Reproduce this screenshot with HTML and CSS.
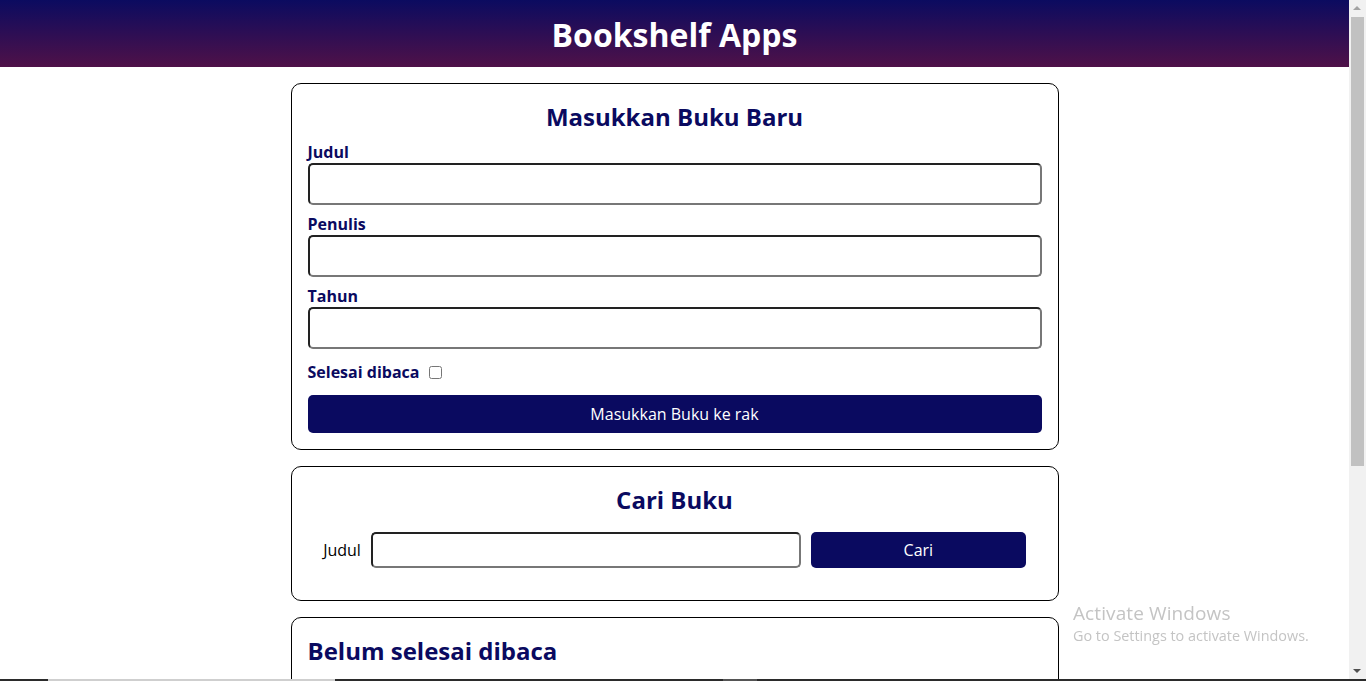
FILE: index.html
```html
<!DOCTYPE html>
<html lang="id">
<head>
<meta charset="utf-8">
<title>Bookshelf Apps</title>
<link rel="stylesheet" href="styles.css">
</head>
<body>
<div class="page">
  <header class="head-bar">
    <h1>Bookshelf Apps</h1>
  </header>
  <main class="main">
    <section class="card">
      <h2 class="card-title">Masukkan Buku Baru</h2>
      <form class="book-form">
        <div class="field">
          <label for="title">Judul</label>
          <input id="title" type="text" class="text-input">
        </div>
        <div class="field">
          <label for="author">Penulis</label>
          <input id="author" type="text" class="text-input">
        </div>
        <div class="field">
          <label for="year">Tahun</label>
          <input id="year" type="number" class="text-input">
        </div>
        <div class="check-row">
          <label for="done">Selesai dibaca</label>
          <input id="done" type="checkbox" class="check">
        </div>
        <button type="button" class="btn btn-full">Masukkan Buku ke rak</button>
      </form>
    </section>

    <section class="card">
      <h2 class="card-title">Cari Buku</h2>
      <form class="search-form">
        <label for="search" class="search-label">Judul</label>
        <input id="search" type="text" class="text-input search-input">
        <button type="button" class="btn search-btn">Cari</button>
      </form>
    </section>

    <section class="card card-list">
      <h2 class="card-title left">Belum selesai dibaca</h2>
      <div class="book-list"></div>
    </section>
  </main>
</div>

<div class="scrollbar">
  <div class="sb-arrow sb-up"></div>
  <div class="sb-thumb"></div>
  <div class="sb-arrow sb-down"></div>
</div>

<div class="watermark">
  <div class="wm-title">Activate Windows</div>
  <div class="wm-sub">Go to Settings to activate Windows.</div>
</div>

<div class="taskbar">
  <span class="tb-seg tb-dark1"></span>
  <span class="tb-seg tb-light"></span>
  <span class="tb-seg tb-dark2"></span>
  <span class="tb-seg tb-mid"></span>
  <span class="tb-seg tb-dark3"></span>
</div>
</body>
</html>
```

FILE: styles.css
```css
html, body {
  margin: 0;
  padding: 0;
  overflow: hidden;
  height: 100%;
}

body {
  font-family: "Open Sans", "Noto Sans", sans-serif;
  background: #ffffff;
  color: #000;
}

.page {
  margin-right: 17px;
}

.head-bar {
  height: 67px;
  background: linear-gradient(to bottom, #0b0b60 0%, #4f1148 100%);
  display: flex;
  align-items: center;
  justify-content: center;
}

.head-bar h1 {
  margin: 0;
  color: #ffffff;
  font-size: 32px;
  font-weight: 700;
  line-height: 1;
  position: relative;
  top: 1px;
}

.main {
  width: 768px;
  margin: 16px auto 0;
  display: flex;
  flex-direction: column;
  gap: 16px;
}

.card {
  border: 1px solid #000;
  border-radius: 10px;
  padding: 16px;
}

.card-title {
  margin: 0;
  font-size: 24px;
  font-weight: 700;
  color: #0a0a60;
  text-align: center;
  line-height: 33px;
}

.card-title.left {
  text-align: left;
}

.book-form {
  display: flex;
  flex-direction: column;
  gap: 8px;
  margin-top: 8px;
}

.field {
  display: flex;
  flex-direction: column;
}

.field label,
.check-row label {
  font-size: 16px;
  font-weight: 700;
  color: #0a0a60;
  line-height: 22px;
}

.text-input {
  box-sizing: border-box;
  height: 42px;
  width: 100%;
  border-radius: 5px;
  border: 2px solid #767676;
  border-top-color: #222;
  border-left-color: #222;
  border-bottom-color: #777;
  border-right-color: #777;
  font-family: inherit;
  font-size: 16px;
  padding: 4px 8px;
  margin: 0;
  background: #fff;
}

.check-row {
  display: flex;
  align-items: center;
  gap: 10px;
  height: 30px;
}

.check {
  width: 13px;
  height: 13px;
  margin: 1px 0 0 0;
}

.btn {
  background: #0a0a60;
  color: #ffffff;
  border: none;
  border-radius: 5px;
  font-family: inherit;
  font-size: 16px;
  cursor: pointer;
}

.btn-full {
  height: 38px;
  width: 100%;
}

.search-form {
  display: flex;
  align-items: center;
  justify-content: center;
  gap: 10px;
  margin: 16px 0;
}

.search-label {
  font-size: 16px;
  color: #000;
}

.search-input {
  width: 430px;
  height: 36px;
}

.search-btn {
  width: 215px;
  height: 36px;
}

.card-list {
  min-height: 80px;
}

/* fake OS scrollbar */
.scrollbar {
  position: fixed;
  top: 0;
  right: 0;
  width: 17px;
  height: 679px;
  background: #f1f1f1;
}

.sb-arrow {
  position: absolute;
  left: 4px;
  width: 0;
  height: 0;
  border-left: 4px solid transparent;
  border-right: 4px solid transparent;
}

.sb-up {
  top: 6px;
  border-bottom: 4px solid #a3a3a3;
}

.sb-down {
  bottom: 6px;
  border-top: 4px solid #505050;
}

.sb-thumb {
  position: absolute;
  top: 17px;
  left: 2px;
  width: 13px;
  height: 449px;
  background: #c1c1c1;
}

/* OS watermark */
.watermark {
  position: fixed;
  left: 1073px;
  top: 600px;
  color: #c4c4c4;
  font-family: "Open Sans", "Noto Sans", sans-serif;
  pointer-events: none;
}

.wm-title {
  font-size: 19px;
  line-height: 26px;
  letter-spacing: 0.1px;
}

.wm-sub {
  font-size: 14.4px;
  line-height: 20px;
  letter-spacing: 0;
}

/* taskbar top edge */
.taskbar {
  position: fixed;
  left: 0;
  bottom: 0;
  width: 100%;
  height: 2px;
  display: flex;
}

.tb-seg {
  height: 2px;
  display: block;
}

.tb-dark1 { width: 48px; background: #2b2b2b; }
.tb-light { width: 287px; background: #cfcfcf; }
.tb-dark2 { width: 388px; background: #2b2b2b; }
.tb-mid { width: 34px; background: #555555; }
.tb-dark3 { flex: 1; background: #2b2b2b; }
```
